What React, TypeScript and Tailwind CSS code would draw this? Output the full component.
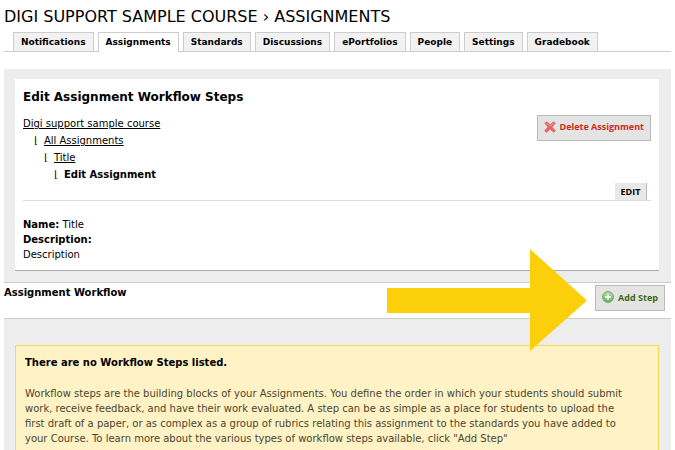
const tabs = [
  'Notifications',
  'Assignments',
  'Standards',
  'Discussions',
  'ePortfolios',
  'People',
  'Settings',
  'Gradebook',
];

function DeleteIcon() {
  return (
    <svg className="mt-0.5 size-3 shrink-0" viewBox="0 0 12 12" aria-hidden="true">
      <path
        d="M2.8 .8Q4.6 1.800 6 3.900 7.600 1.700 9.700 .7L11.400 2.300Q9.400 3.800 8.200 5.900 9.600 8 11.600 9.500L9.700 11.300Q7.700 9.900 6.100 8.100 4.600 10 2.500 11.400L.5 9.600Q2.500 8.100 3.900 6 2.600 3.900 .7 2.500Z"
        fill="#ec6561"
        stroke="#d9605b"
        strokeWidth=".6"
        strokeLinejoin="round"
      />
      <path d="M2.500 1.900 5.900 5.300 9.500 1.900" fill="none" stroke="#f59a97" strokeWidth=".9" />
    </svg>
  );
}

function AddIcon() {
  return (
    <svg className="size-3 shrink-0" viewBox="0 0 12 12" aria-hidden="true">
      <defs>
        <linearGradient id="add-fill" x1="0" y1="0" x2="0" y2="1">
          <stop offset="0" stopColor="#b4dcaa" />
          <stop offset="1" stopColor="#62b155" />
        </linearGradient>
      </defs>
      <circle cx="6" cy="6" r="5.500" fill="url(#add-fill)" stroke="#74a96c" strokeWidth=".9" />
      <path d="M6 3.200V8.800M3.200 6H8.800" stroke="#fff" strokeWidth="1.800" />
    </svg>
  );
}

function Arrow() {
  return (
    <svg
      className="pointer-events-none absolute -top-[34px] right-[84px] h-[102px] w-[200px]"
      viewBox="0 0 200 102"
      aria-hidden="true"
    >
      <path d="M0 39H143V0L200 51.500 143 102V64H0Z" fill="#fbd00a" />
    </svg>
  );
}

export default function App() {
  return (
    <div className="flex min-h-screen flex-col bg-white px-1 font-['DejaVu_Sans',Verdana,sans-serif] text-[10px] leading-[15px] text-black">
      <h1 className="pt-1.5 text-[16px] leading-[22px] whitespace-nowrap">
        DIGI SUPPORT SAMPLE COURSE › ASSIGNMENTS
      </h1>

      <nav className="mt-1 flex gap-1 border-b border-[#ccc] pl-[9px]">
        {tabs.map((tab) => (
          <a
            key={tab}
            href="#"
            className={
              tab === 'Assignments'
                ? '-mb-px border border-b-0 border-[#ccc] bg-white px-[7px] pb-px text-[9px] leading-[18px] font-bold'
                : 'border border-b-0 border-[#ccc] bg-[#f2f2f2] px-[7px] text-[9px] leading-[18px] font-bold'
            }
          >
            {tab}
          </a>
        ))}
      </nav>

      <section className="mt-[17px] bg-[#ededed] pt-2.5 pr-3 pb-[11px] pl-[11px]">
        <div className="border-b border-[#aaa] bg-white px-2 pt-2.5 pb-2">
          <h2 className="text-[12px] leading-4 font-bold">Edit Assignment Workflow Steps</h2>
          <div className="mt-2.5 flex items-start justify-between">
            <ul className="leading-[17px]">
              <li>
                <a href="#" className="underline">Digi support sample course</a>
              </li>
              <li className="flex gap-1.5 pl-[11px]">
                <span>⌊</span>
                <a href="#" className="underline">All Assignments</a>
              </li>
              <li className="flex gap-1.5 pl-[21px]">
                <span>⌊</span>
                <a href="#" className="underline">Title</a>
              </li>
              <li className="flex gap-1.5 pl-[31px]">
                <span>⌊</span>
                <strong>Edit Assignment</strong>
              </li>
            </ul>
            <button className="flex h-[26px] items-center justify-center gap-1 border border-[#bbb] bg-[#e4e4e4] px-1.5 pb-1 font-['Open_Sans',sans-serif] text-[9px] font-bold whitespace-nowrap text-[#cc2a1c]">
              <DeleteIcon />
              Delete Assignment
            </button>
          </div>
          <div className="flex justify-end border-b border-[#ddd] pr-1">
            <button className="h-[17px] w-8 border-r border-[#bbb] bg-[#e8e8e8] font-['Open_Sans',sans-serif] text-[9px] font-bold">
              EDIT
            </button>
          </div>
          <div className="mt-4">
            <p><strong>Name:</strong> Title</p>
            <p><strong>Description:</strong></p>
            <p>Description</p>
          </div>
        </div>
      </section>

      <section className="relative flex h-[37px] items-start justify-between border-y border-[#ccc] pt-0.5 pr-1.5">
        <h2 className="text-[10px] font-bold">Assignment Workflow</h2>
        <button className="flex h-[26px] w-[70px] items-center justify-center gap-1 border border-[#bbb] bg-[#e4e4e4] pb-0.5 font-['Open_Sans',sans-serif] text-[9px] font-bold whitespace-nowrap text-[#3a6b10]">
          <AddIcon />
          Add Step
        </button>
        <Arrow />
      </section>

      <section className="flex flex-1 flex-col bg-[#ededed] pt-[26px] pr-3 pl-[11px]">
        <div className="flex-1 border border-b-0 border-[#f9d65c] bg-[#fff2c4] px-[9px] pt-[9px]">
          <h3 className="text-[10px] font-bold">There are no Workflow Steps listed.</h3>
          <p className="mt-4 pr-6 text-[#4a4630]">
            Workflow steps are the building blocks of your Assignments. You define the order in
            which your students should submit work, receive feedback, and have their work
            evaluated. A step can be as simple as a place for students to upload the first draft of
            a paper, or as complex as a group of rubrics relating this assignment to the standards
            you have added to your Course. To learn more about the various types of workflow steps
            available, click "Add Step"
          </p>
        </div>
      </section>
    </div>
  );
}
